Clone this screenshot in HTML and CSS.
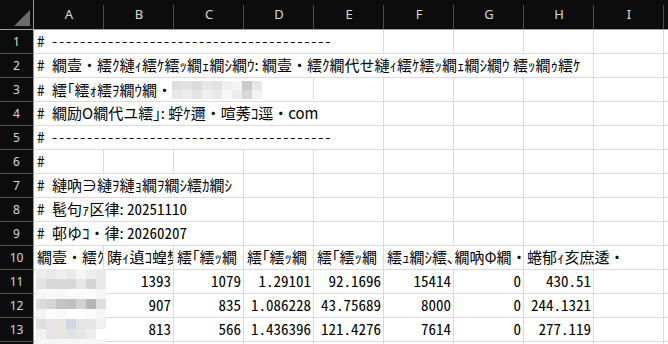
FILE: index.html
```html
<!DOCTYPE html>
<html>
<head>
    <title>Sheet</title>
    <link rel="stylesheet" href="styles.css">
</head>
<body>
    <div class="sheet">
        <div class="row head">
            <div class="corner">
                <svg width="33" height="29" viewBox="0 0 33 29"><polygon points="30,10 30,26 14,26" fill="#6b6b6b"/></svg>
            </div>
            <div class="col">A</div>
            <div class="col">B</div>
            <div class="col">C</div>
            <div class="col">D</div>
            <div class="col">E</div>
            <div class="col">F</div>
            <div class="col">G</div>
            <div class="col">H</div>
            <div class="col">I</div>
            <div class="col"></div>
        </div>

        <div class="row">
            <div class="num">1</div>
            <div class="cell s5"><span class="fig"># </span><span class="dash">----------------------------------------</span></div>
            <div class="cell"></div><div class="cell"></div><div class="cell"></div><div class="cell"></div><div class="cell"></div>
        </div>
        <div class="row">
            <div class="num">2</div>
            <div class="cell s8"><span class="fig"># </span>繝壹・繧ｸ縺ｨ繧ｹ繧ｯ繝ｪ繝ｼ繝ｳ: 繝壹・繧ｸ繝代せ縺ｨ繧ｹ繧ｯ繝ｪ繝ｼ繝ｳ 繧ｯ繝ｩ繧ｹ</div>
            <div class="cell"></div><div class="cell"></div>
        </div>
        <div class="row">
            <div class="num">3</div>
            <div class="cell s4 flex"><span><span class="fig"># </span>繧｢繧ｫ繧ｦ繝ｳ繝・</span><span class="blur">
                <i style="background:#dedede"></i><i style="background:#e4e2de"></i><i style="background:#dcdcdc"></i><i style="background:#e8e6e2"></i><i style="background:#e2e2e2"></i><i style="background:#f0f0f0"></i><i style="background:#f4f4f4"></i><i style="background:#c9c9c9"></i><i style="background:#e6e6e6"></i>
                <i style="background:#e8e8e8"></i><i style="background:#ececec"></i><i style="background:#e4e4e4"></i><i style="background:#f0f0ee"></i><i style="background:#e8e8e8"></i><i style="background:#f6f6f6"></i><i style="background:#ececec"></i><i style="background:#d8d8d8"></i><i style="background:#f2f2f2"></i>
            </span></div>
            <div class="cell"></div><div class="cell"></div><div class="cell"></div><div class="cell"></div><div class="cell"></div><div class="cell"></div>
        </div>
        <div class="row">
            <div class="num">4</div>
            <div class="cell s5"><span class="fig"># </span>繝励Ο繝代ユ繧｣: 蜉ｹ邇・喧莠ｺ逕・com</div>
            <div class="cell"></div><div class="cell"></div><div class="cell"></div><div class="cell"></div><div class="cell"></div>
        </div>
        <div class="row">
            <div class="num">5</div>
            <div class="cell s5"><span class="fig"># </span><span class="dash">----------------------------------------</span></div>
            <div class="cell"></div><div class="cell"></div><div class="cell"></div><div class="cell"></div><div class="cell"></div>
        </div>
        <div class="row">
            <div class="num">6</div>
            <div class="cell"><span class="fig">#</span></div>
            <div class="cell"></div><div class="cell"></div><div class="cell"></div><div class="cell"></div><div class="cell"></div><div class="cell"></div><div class="cell"></div><div class="cell"></div><div class="cell"></div>
        </div>
        <div class="row">
            <div class="num">7</div>
            <div class="cell s3"><span class="fig"># </span>縺吶∋縺ｦ縺ｮ繝ｦ繝ｼ繧ｶ繝ｼ</div>
            <div class="cell"></div><div class="cell"></div><div class="cell"></div><div class="cell"></div><div class="cell"></div><div class="cell"></div><div class="cell"></div>
        </div>
        <div class="row">
            <div class="num">8</div>
            <div class="cell s3"><span class="fig"># </span>髢句ｧ区律: <span class="fig">20251110</span></div>
            <div class="cell"></div><div class="cell"></div><div class="cell"></div><div class="cell"></div><div class="cell"></div><div class="cell"></div><div class="cell"></div>
        </div>
        <div class="row">
            <div class="num">9</div>
            <div class="cell s3"><span class="fig"># </span>邨ゆｺ・律: <span class="fig">20260207</span></div>
            <div class="cell"></div><div class="cell"></div><div class="cell"></div><div class="cell"></div><div class="cell"></div><div class="cell"></div><div class="cell"></div>
        </div>
        <div class="row">
            <div class="num">10</div>
            <div class="cell">繝壹・繧ｸ繝代せ縺ｨ繧ｹ繧ｯ繝ｪ繝ｼ繝ｳ 繧ｯ繝ｩ繧ｹ</div>
            <div class="cell">陦ｨ遉ｺ蝗樊焚</div>
            <div class="cell">繧｢繧ｯ繝・ぅ繝悶Θ繝ｼ繧ｶ繝ｼ</div>
            <div class="cell">繧｢繧ｯ繝・ぅ繝悶Θ繝ｼ繧ｶ繝ｼ縺ゅ◆繧翫・陦ｨ遉ｺ蝗樊焚</div>
            <div class="cell">繧｢繧ｯ繝・ぅ繝悶Θ繝ｼ繧ｶ繝ｼ縺ゅ◆繧翫・蟷ｳ蝮・</div>
            <div class="cell s2">繧ｭ繝ｼ繧､繝吶Φ繝・</div>
            <div class="cell s2">蜷郁ｨ亥庶逶・</div>
            <div class="cell"></div>
        </div>
        <div class="row">
            <div class="num">11</div>
            <div class="cell"></div>
            <div class="cell r">1393</div>
            <div class="cell r">1079</div>
            <div class="cell r">1.29101</div>
            <div class="cell r">92.1696</div>
            <div class="cell r">15414</div>
            <div class="cell r">0</div>
            <div class="cell r">430.51</div>
            <div class="cell"></div><div class="cell"></div>
        </div>
        <div class="row">
            <div class="num">12</div>
            <div class="cell"></div>
            <div class="cell r">907</div>
            <div class="cell r">835</div>
            <div class="cell r">1.086228</div>
            <div class="cell r">43.75689</div>
            <div class="cell r">8000</div>
            <div class="cell r">0</div>
            <div class="cell r">244.1321</div>
            <div class="cell"></div><div class="cell"></div>
        </div>
        <div class="row">
            <div class="num">13</div>
            <div class="cell"></div>
            <div class="cell r">813</div>
            <div class="cell r">566</div>
            <div class="cell r">1.436396</div>
            <div class="cell r">121.4276</div>
            <div class="cell r">7614</div>
            <div class="cell r">0</div>
            <div class="cell r">277.119</div>
            <div class="cell"></div><div class="cell"></div>
        </div>
        <div class="row">
            <div class="num">14</div>
            <div class="cell"></div><div class="cell"></div><div class="cell"></div><div class="cell"></div><div class="cell"></div><div class="cell"></div><div class="cell"></div><div class="cell"></div><div class="cell"></div><div class="cell"></div>
        </div>

        <!-- redacted names in A11:A13 -->
        <div class="mosaic">
            <i style="background:#ececec"></i><i style="background:#e9e9ec"></i><i style="background:#efefef"></i><i style="background:#e9e9eb"></i><i style="background:#f5f5f5"></i><i style="background:#eeeeef"></i><i style="background:#e9e9eb"></i>
            <i style="background:#e3e3e5"></i><i style="background:#d7d7d7"></i><i style="background:#d7d7d7"></i><i style="background:#d8d8d8"></i><i style="background:#e7e7e7"></i><i style="background:#d4d4d6"></i><i style="background:#e9e9eb"></i>
            <i style="background:#f6f6f6"></i><i style="background:#fafafa"></i><i style="background:#f7f7f7"></i><i style="background:#fbfbfb"></i><i style="background:#fbfbfb"></i><i style="background:#fbfbfb"></i><i style="background:#f5f5f5"></i>
            <i style="background:#dcdcdc"></i><i style="background:#d5d5d7"></i><i style="background:#c7c3be"></i><i style="background:#bcc0c6"></i><i style="background:#d2d0d0"></i><i style="background:#b6b6b6"></i><i style="background:#dedede"></i>
            <i style="background:#f3f3f3"></i><i style="background:#fcfcfc"></i><i style="background:#f9f9f9"></i><i style="background:#ffffff"></i><i style="background:#ffffff"></i><i style="background:#fafafa"></i><i style="background:#f5f5f5"></i>
            <i style="background:#dedede"></i><i style="background:#e4e6ea"></i><i style="background:#e8e4de"></i><i style="background:#d2d6de"></i><i style="background:#e2e4e8"></i><i style="background:#e6e6e6"></i><i style="background:#f2f2f2"></i>
            <i style="background:#f0f0f0"></i><i style="background:#e4e4e4"></i><i style="background:#e8e6e2"></i><i style="background:#e0e2e6"></i><i style="background:#e6e6e6"></i><i style="background:#ececec"></i><i style="background:#ffffff"></i>
            <i style="background:#f6f6f6"></i><i style="background:#f6f6f6"></i><i style="background:#f6f6f6"></i><i style="background:#f6f6f6"></i><i style="background:#f6f6f6"></i><i style="background:#f6f6f6"></i><i style="background:#f6f6f6"></i>
        </div>
    </div>
</body>
</html>
```

FILE: styles.css
```css
body {
    margin: 0;
    background: #fff;
}
.sheet {
    position: relative;
    width: 668px;
    height: 344px;
    overflow: hidden;
    font-family: "Noto Sans CJK JP", sans-serif;
}
.row {
    display: grid;
    grid-template-columns: 34px repeat(10, 70px);
    height: 24px;
}
.head {
    height: 30px;
    background: #0c0c0c;
    border-bottom: 1px solid #a3a3a3;
    box-sizing: border-box;
}
.corner {
    border-right: 1px solid #9a9a9a;
}
.corner svg {
    display: block;
}
.col {
    color: #d9d9d9;
    font: 13px "Noto Sans", sans-serif;
    line-height: 29px;
    text-align: center;
    background: linear-gradient(#4d4d4d, #4d4d4d) no-repeat right bottom / 1px 24px;
}
.num {
    background: #0c0c0c;
    color: #d9d9d9;
    font: 12px "Noto Sans", sans-serif;
    line-height: 23px;
    text-align: center;
    border-right: 1px solid #9a9a9a;
    border-bottom: 1px solid #555;
}
.cell {
    box-sizing: border-box;
    height: 24px;
    padding: 0 3px;
    border-right: 1px solid #dadada;
    border-bottom: 1px solid #dadada;
    color: #000;
    font-size: 15px;
    line-height: 22px;
    white-space: nowrap;
    overflow: hidden;
}
.flex {
    display: flex;
    align-items: center;
}
.s2 { grid-column: span 2; }
.s3 { grid-column: span 3; }
.s4 { grid-column: span 4; }
.s5 { grid-column: span 5; }
.s8 { grid-column: span 8; }
.r {
    text-align: right;
    padding-right: 2px;
    font-feature-settings: "hwid";
}
.fig {
    font-feature-settings: "hwid";
}
.dash {
    letter-spacing: 1.8px;
}
.blur {
    display: grid;
    grid-template-columns: repeat(9, 10px);
    grid-auto-rows: 9px;
    margin: 1px 0 0 0;
}
.mosaic {
    position: absolute;
    left: 36px;
    top: 269px;
    display: grid;
    grid-template-columns: repeat(7, 10px);
    grid-auto-rows: 10px;
}
.mosaic i, .blur i {
    display: block;
}
```
